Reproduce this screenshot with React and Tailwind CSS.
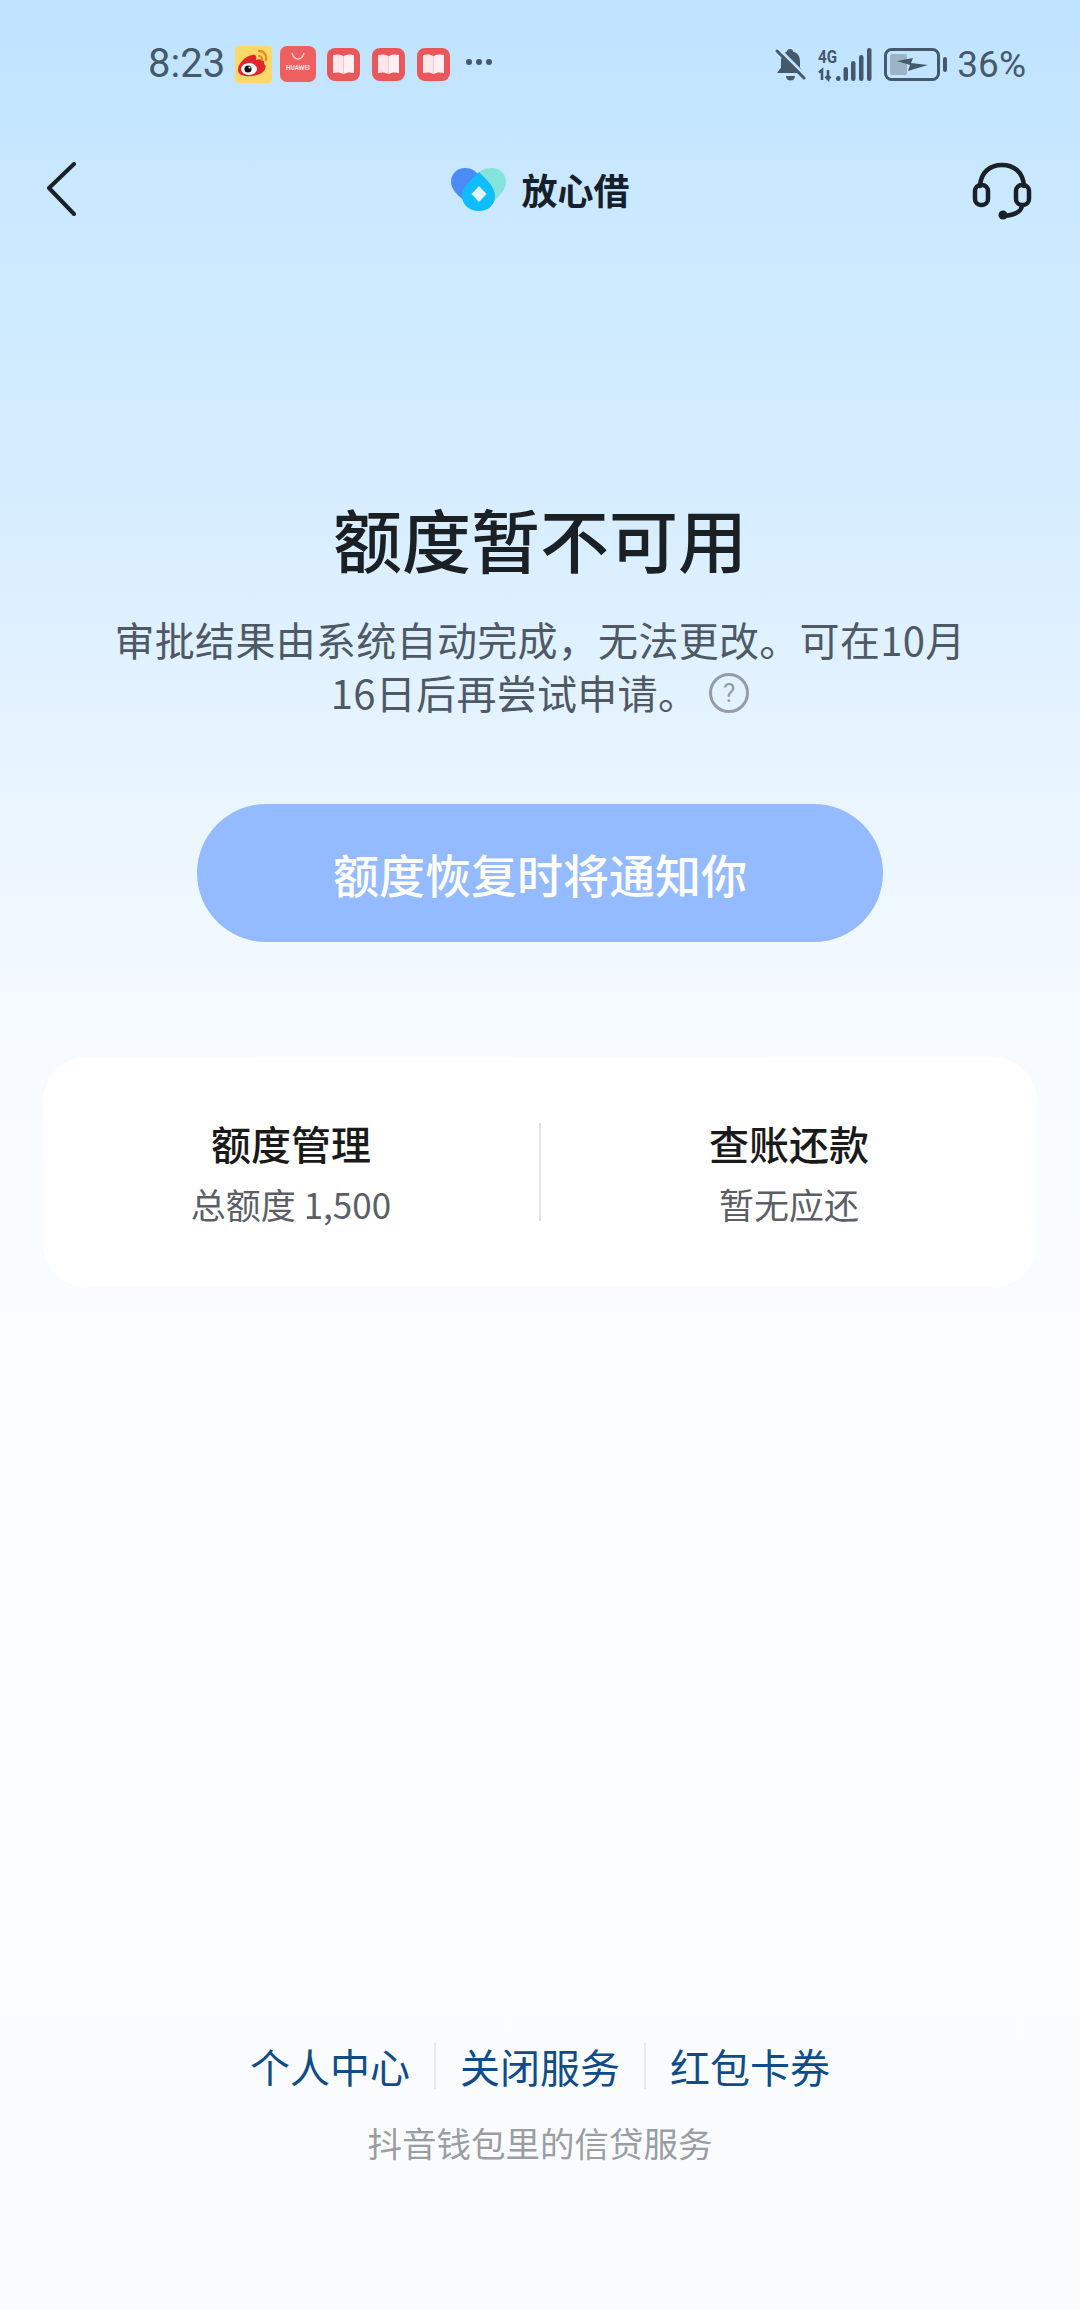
function Weibo() {
  return (
    <svg width="37" height="37" viewBox="0 0 37 37" className="shrink-0">
      <rect width="37" height="37" rx="4" fill="#fbd968" />
      <path d="M3 24c0-7 8-14 14-15 4-1 5 2 4 5 5-2 9 0 8 4 4 2 1 11-12 12C9 31 3 29 3 24z" fill="#e0262c" />
      <ellipse cx="14" cy="23" rx="8" ry="6" fill="#fff" />
      <circle cx="13" cy="23" r="3.6" fill="#111" />
      <circle cx="14.5" cy="21.6" r="1" fill="#fff" />
      <path d="M24 5c5 0 8 4 7 9" fill="none" stroke="#f08a1c" strokeWidth="2.4" strokeLinecap="round" />
      <path d="M24 10c2 0 3.4 1.6 3 4" fill="none" stroke="#f08a1c" strokeWidth="2.2" strokeLinecap="round" />
    </svg>
  );
}
function Huawei() {
  return (
    <svg width="36" height="36" viewBox="0 0 36 36" className="shrink-0">
      <rect width="36" height="36" rx="7" fill="#ee5f5f" />
      <path d="M12 7c1 4 3.500 6 6 6s5-2 6-6" fill="none" stroke="#fbd5d5" strokeWidth="1.300" />
      <text x="18" y="23.500" textAnchor="middle" fontSize="6.400" fontWeight="700" fill="#fde3e3" fontFamily="Roboto, sans-serif">HUAWEI</text>
    </svg>
  );
}
function Book() {
  return (
    <svg width="33" height="33" viewBox="0 0 33 33" className="shrink-0">
      <rect width="33" height="33" rx="8" fill="#e9575b" />
      <path d="M6 7c4-1 8-.5 10.500 1v18c-2.500-1.500-6.500-2-10.500-1z" fill="#fbe6ea" />
      <path d="M27 7c-4-1-8-.5-10.500 1v18c2.500-1.500 6.500-2 10.500-1z" fill="#fdf0f2" />
    </svg>
  );
}
function Bell() {
  return (
    <svg width="31" height="33" viewBox="0 0 31 33" className="shrink-0">
      <path d="M15 1c2 0 3 1 3 2.500 5 1.500 7 5 7 10v6l4 5.500H2l4-5.500v-6c0-5 2-8.500 6-10C12 2 13 1 15 1z" fill="#46596b" />
      <path d="M11 28h9c0 3-2 4.500-4.500 4.500S11 31 11 28z" fill="#46596b" />
      <path d="M4 1l27 27" stroke="#bfe2ff" strokeWidth="3" />
      <path d="M2 3l27 27" stroke="#46596b" strokeWidth="3" strokeLinecap="round" />
    </svg>
  );
}
function Signal() {
  return (
    <svg width="54" height="33" viewBox="0 0 54 33" className="shrink-0 overflow-visible">
      <text x="0" y="15" fontSize="19" fontWeight="700" fill="#46596b" fontFamily="Roboto, sans-serif" textLength="19" lengthAdjust="spacingAndGlyphs">4G</text>
      <path d="M4 32V22l-3 2.500M10 22v9l-2.500-2.500M10 31l2.500-2.500" fill="none" stroke="#46596b" strokeWidth="2.600" />
      <rect x="18" y="28" width="4.500" height="5" rx="2.200" fill="#46596b" />
      <rect x="25.500" y="19" width="4.500" height="14" rx="2.200" fill="#46596b" />
      <rect x="33" y="13" width="4.500" height="20" rx="2.200" fill="#46596b" />
      <rect x="41" y="7" width="4.500" height="26" rx="2.200" fill="#46596b" />
      <rect x="49" y="0" width="4.500" height="33" rx="2.200" fill="#46596b" />
    </svg>
  );
}
function Battery() {
  return (
    <svg width="64" height="33" viewBox="0 0 64 33" className="shrink-0">
      <rect x="1.500" y="1.500" width="53" height="30" rx="6" fill="none" stroke="#46596b" strokeWidth="3" />
      <rect x="6" y="6" width="17" height="21" rx="2" fill="#9db4c6" />
      <path d="M13 13l16-3-2 5 17 2-20 6 2-6z" fill="#46596b" />
      <rect x="59" y="9" width="4" height="15" rx="2" fill="#46596b" />
    </svg>
  );
}
function LogoMark() {
  return (
    <svg width="55" height="44" viewBox="0 0 55 44" className="shrink-0">
      <path d="M41 1c8 0 14 6 14 14 0 7-5 12-13 20L24 10C28 4 33 1 41 1z" fill="#84e3da" />
      <path d="M14 1c7 0 11 3 15 9L16 36C6 28 0 22 0 15 0 7 6 1 14 1z" fill="#4a8bf6" />
      <path d="M28 5c7 7 16 15 16 24 0 9-7 15-16 15S11 38 11 29c0-9 10-17 17-24z" fill="#0fbcfd" />
      <path d="M28 19l7.500 8-7.500 8-7.500-8z" fill="#dff6fe" />
    </svg>
  );
}
function Headset() {
  return (
    <svg width="60" height="58" viewBox="0 0 60 58" fill="none" stroke="#1a2126" strokeWidth="4.500" strokeLinecap="round" className="shrink-0">
      <path d="M8 24C9 10 18 3 30 3s21 7 22 21" />
      <rect x="3" y="23" width="13" height="20" rx="6" />
      <rect x="44" y="23" width="13" height="20" rx="6" />
      <path d="M50 44c-1 6-7 9-18 10" />
      <circle cx="31" cy="53" r="4.500" fill="#1a2126" stroke="none" />
    </svg>
  );
}
function Help() {
  return (
    <span className="inline-flex w-[40px] h-[40px] -my-[10px] rounded-full border-[3px] border-[#959ca3] items-center justify-center align-[7px] ml-[11px] tracking-normal text-[#959ca3] text-[26px] leading-none font-['Roboto',sans-serif]">?</span>
  );
}

export default function App() {
  return (
    <div className="w-[1080px] h-[2310px] flex flex-col overflow-hidden font-['Noto_Sans_CJK_SC','Noto_Sans',sans-serif] bg-[linear-gradient(180deg,#bee2ff_0%,#c9e8ff_8%,#d8eeff_23%,#e6f3ff_32%,#f7fbff_46%,#fafcff_60%,#fafbfc_100%)]">
      <div className="h-[128px] flex items-center pl-[148px] pr-[54px] text-[#46596b] shrink-0">
        <span className="text-[40px] leading-none font-['Roboto',sans-serif] w-[87px]">8:23</span>
        <div className="flex items-center gap-[8px]"><Weibo /><Huawei /></div>
        <div className="flex items-center gap-[12px] ml-[11px]"><Book /><Book /><Book /></div>
        <div className="flex gap-[4px] ml-[16px] -mt-[4px]">
          <span className="w-[6px] h-[6px] rounded-full bg-[#46596b]" />
          <span className="w-[6px] h-[6px] rounded-full bg-[#46596b]" />
          <span className="w-[6px] h-[6px] rounded-full bg-[#46596b]" />
        </div>
        <div className="ml-auto flex items-center">
          <Bell />
          <div className="ml-[12px]"><Signal /></div>
          <div className="ml-[12px]"><Battery /></div>
          <span className="ml-[9px] text-[37px] leading-none font-['Roboto',sans-serif]">36%</span>
        </div>
      </div>

      <div className="grid grid-cols-[1fr_auto_1fr] items-center pl-[49px] pr-[48px] h-[122px] shrink-0">
        <svg width="29" height="54" viewBox="0 0 29 54" fill="none" stroke="#1a2126" strokeWidth="4" strokeLinecap="round" strokeLinejoin="round" className="-ml-[2px]">
          <path d="M27 2L2 26l25 26" />
        </svg>
        <div className="flex items-center gap-[15px]">
          <LogoMark />
          <span className="text-[36px] leading-none font-bold text-[#15202b]">放心借</span>
        </div>
        <div className="justify-self-end mt-[4px]"><Headset /></div>
      </div>

      <h1 className="mt-[248px] text-center text-[69px] leading-[80px] font-medium text-[#1b2024]">额度暂不可用</h1>
      <p className="mt-[35px] mx-auto w-[880px] text-center text-[40px] tracking-[0.3px] leading-[53px] text-[#4e5965]">
        {"审批结果由系统自动完成\uFF0C无法更改。可在10月"}<br />{"16日后再尝试申请。"}<Help />
      </p>
      <div className="mt-[85px] mx-auto w-[686px] h-[138px] rounded-full bg-[#94bbff] flex items-center justify-center text-white text-[46px] font-medium">
        额度恢复时将通知你
      </div>

      <div className="mt-[115px] mx-[43px] h-[230px] pb-[1px] rounded-[44px] bg-white flex items-center">
        <div className="flex-1 flex flex-col items-center">
          <span className="text-[40px] leading-[54px] font-medium text-[#1a1a1a]">额度管理</span>
          <span className="mt-[11px] text-[35px] leading-[46px] text-[#5c5f66]">总额度 1,500</span>
        </div>
        <div className="w-[2px] h-[98px] bg-[#e4e5e7]" />
        <div className="flex-1 flex flex-col items-center">
          <span className="text-[40px] leading-[54px] font-medium text-[#1a1a1a]">查账还款</span>
          <span className="mt-[11px] text-[35px] leading-[46px] text-[#5c5f66]">暂无应还</span>
        </div>
      </div>

      <div className="mt-auto pb-[142px] flex flex-col items-center">
        <div className="flex items-center text-[40px] leading-[56px] text-[#0f4c8a]">
          <span className="pr-[24px]">个人中心</span>
          <span className="w-[2px] h-[46px] bg-[#e6e8ea]" />
          <span className="px-[24px]">关闭服务</span>
          <span className="w-[2px] h-[46px] bg-[#e6e8ea]" />
          <span className="pl-[24px]">红包卡券</span>
        </div>
        <span className="mt-[22px] text-[34.5px] leading-[52px] text-[#9a9ea3]">抖音钱包里的信贷服务</span>
      </div>
    </div>
  );
}
